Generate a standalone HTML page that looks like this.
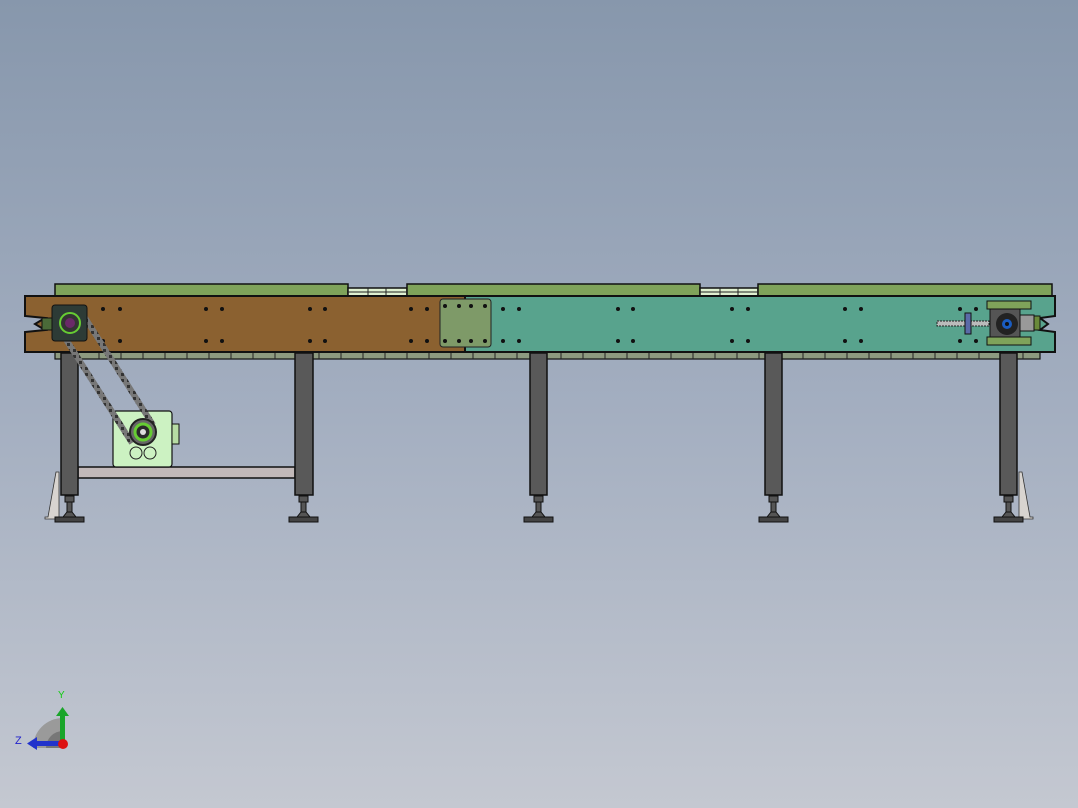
<!DOCTYPE html>
<html><head><meta charset="utf-8"><style>
html,body{margin:0;padding:0;width:1078px;height:808px;overflow:hidden}
body{background:linear-gradient(#8797ac 0%,#a3aec0 50%,#c4c8d1 100%)}
svg{display:block}
</style></head><body>
<svg width="1078" height="808" viewBox="0 0 1078 808" xmlns="http://www.w3.org/2000/svg">
<defs>
<pattern id="chain" width="6" height="6" patternUnits="userSpaceOnUse"><rect width="6" height="6" fill="#777"/><rect x="1" y="1" width="3" height="3" fill="#333"/></pattern>
</defs>
<g stroke="#111" stroke-width="1.5">
<rect x="55" y="284" width="293" height="12" fill="#7fa35a"/>
<rect x="348" y="288" width="59" height="8" fill="#dff0d0"/>
<rect x="407" y="284" width="293" height="12" fill="#7fa35a"/>
<rect x="700" y="288" width="58" height="8" fill="#dff0d0"/>
<rect x="758" y="284" width="294" height="12" fill="#7fa35a"/>
</g>
<g stroke="#222" stroke-width="1"><line x1="348" y1="292" x2="407" y2="292"/><line x1="700" y1="292" x2="758" y2="292"/>
<line x1="368" y1="288" x2="368" y2="296"/><line x1="386" y1="288" x2="386" y2="296"/><line x1="720" y1="288" x2="720" y2="296"/><line x1="738" y1="288" x2="738" y2="296"/></g>
<rect x="55" y="352" width="985" height="7" fill="#8d9a80" stroke="#111" stroke-width="1.2"/>
<g stroke="#222" stroke-width="1">
<path d="M77 352v7M99 352v7M121 352v7M143 352v7M165 352v7M187 352v7M209 352v7M231 352v7M253 352v7M275 352v7M297 352v7M319 352v7M341 352v7M363 352v7M385 352v7M407 352v7M429 352v7M451 352v7M473 352v7M495 352v7M517 352v7M539 352v7M561 352v7M583 352v7M605 352v7M627 352v7M649 352v7M671 352v7M693 352v7M715 352v7M737 352v7M759 352v7M781 352v7M803 352v7M825 352v7M847 352v7M869 352v7M891 352v7M913 352v7M935 352v7M957 352v7M979 352v7M1001 352v7M1023 352v7"/>
</g>
<path d="M25 296H465V352H25V332L45 330L35 324L45 318L25 316Z" fill="#8b6130" stroke="#111" stroke-width="2"/>
<path d="M465 296H1055V316L1040 318L1048 324L1040 330L1055 332V352H465Z" fill="#58a38d" stroke="#111" stroke-width="2"/>
<rect x="440" y="299" width="51" height="48" rx="3" fill="#7e9a68" stroke="#222"/>
<g fill="#111">
<circle cx="103" cy="309" r="2"/><circle cx="120" cy="309" r="2"/><circle cx="103" cy="341" r="2"/><circle cx="120" cy="341" r="2"/>
<circle cx="206" cy="309" r="2"/><circle cx="222" cy="309" r="2"/><circle cx="206" cy="341" r="2"/><circle cx="222" cy="341" r="2"/>
<circle cx="310" cy="309" r="2"/><circle cx="325" cy="309" r="2"/><circle cx="310" cy="341" r="2"/><circle cx="325" cy="341" r="2"/>
<circle cx="411" cy="309" r="2"/><circle cx="427" cy="309" r="2"/><circle cx="411" cy="341" r="2"/><circle cx="427" cy="341" r="2"/>
<circle cx="445" cy="306" r="2"/><circle cx="459" cy="306" r="2"/><circle cx="471" cy="306" r="2"/><circle cx="485" cy="306" r="2"/>
<circle cx="445" cy="341" r="2"/><circle cx="459" cy="341" r="2"/><circle cx="471" cy="341" r="2"/><circle cx="485" cy="341" r="2"/>
<circle cx="503" cy="309" r="2"/><circle cx="519" cy="309" r="2"/><circle cx="503" cy="341" r="2"/><circle cx="519" cy="341" r="2"/>
<circle cx="618" cy="309" r="2"/><circle cx="633" cy="309" r="2"/><circle cx="618" cy="341" r="2"/><circle cx="633" cy="341" r="2"/>
<circle cx="732" cy="309" r="2"/><circle cx="748" cy="309" r="2"/><circle cx="732" cy="341" r="2"/><circle cx="748" cy="341" r="2"/>
<circle cx="845" cy="309" r="2"/><circle cx="861" cy="309" r="2"/><circle cx="845" cy="341" r="2"/><circle cx="861" cy="341" r="2"/>
<circle cx="960" cy="309" r="2"/><circle cx="976" cy="309" r="2"/><circle cx="960" cy="341" r="2"/><circle cx="976" cy="341" r="2"/>
</g>
<g stroke="#111" stroke-width="1.5">
<rect x="78" y="467" width="217" height="11" fill="#c2b9b9"/>
<rect x="61" y="353" width="17" height="142" fill="#595959"/>
<rect x="295" y="353" width="18" height="142" fill="#595959"/>
<rect x="530" y="353" width="17" height="142" fill="#595959"/>
<rect x="765" y="353" width="17" height="142" fill="#595959"/>
<rect x="1000" y="353" width="17" height="142" fill="#595959"/>
</g>
<g fill="#d8d4d0" stroke="#333" stroke-width="0.8">
<path d="M56 472h3v47h-14v-2h3z"/><path d="M1022 472h-3v47h14v-2h-3z"/>
</g>
<g fill="#555" stroke="#111" stroke-width="1">
<rect x="65" y="496" width="9" height="6"/><rect x="67" y="502" width="5" height="10"/><path d="M63 517L67 512H72L76 517Z"/><rect x="55" y="517" width="29" height="5" fill="#444"/>
<rect x="299" y="496" width="9" height="6"/><rect x="301" y="502" width="5" height="10"/><path d="M297 517L301 512H306L310 517Z"/><rect x="289" y="517" width="29" height="5" fill="#444"/>
<rect x="534" y="496" width="9" height="6"/><rect x="536" y="502" width="5" height="10"/><path d="M532 517L536 512H541L545 517Z"/><rect x="524" y="517" width="29" height="5" fill="#444"/>
<rect x="769" y="496" width="9" height="6"/><rect x="771" y="502" width="5" height="10"/><path d="M767 517L771 512H776L780 517Z"/><rect x="759" y="517" width="29" height="5" fill="#444"/>
<rect x="1004" y="496" width="9" height="6"/><rect x="1006" y="502" width="5" height="10"/><path d="M1002 517L1006 512H1011L1015 517Z"/><rect x="994" y="517" width="29" height="5" fill="#444"/>
</g>
<rect x="113" y="411" width="59" height="56" rx="3" fill="#ccf2c2" stroke="#111" stroke-width="1.2"/>
<rect x="172" y="424" width="7" height="20" fill="#b7dca4" stroke="#111"/>
<circle cx="136" cy="453" r="6" fill="none" stroke="#222"/><circle cx="150" cy="453" r="6" fill="none" stroke="#222"/>
<path d="M60 330L132 443M82 313L153 425" stroke="url(#chain)" stroke-width="6" fill="none"/>
<circle cx="143" cy="432" r="13" fill="#666" stroke="#222" stroke-width="2"/>
<circle cx="143" cy="432" r="8" fill="#2a2a2a" stroke="#6c3" stroke-width="3"/>
<circle cx="143" cy="432" r="3" fill="#ddd"/>
<rect x="52" y="305" width="35" height="36" rx="3" fill="#2d3b36" stroke="#111"/>
<rect x="42" y="318" width="10" height="12" fill="#4a6a38" stroke="#111"/>
<circle cx="70" cy="323" r="10" fill="#333" stroke="#6c3" stroke-width="2"/>
<circle cx="70" cy="323" r="5" fill="#6a2868"/>
<rect x="987" y="301" width="44" height="8" fill="#7fa35a" stroke="#111"/>
<rect x="987" y="337" width="44" height="8" fill="#7fa35a" stroke="#111"/>
<rect x="990" y="309" width="30" height="28" fill="#555" stroke="#111"/>
<rect x="1020" y="315" width="14" height="16" fill="#999" stroke="#111"/>
<rect x="1034" y="316" width="6" height="14" fill="#6a8a3a" stroke="#111"/>
<rect x="937" y="321" width="52" height="5" fill="#bbb" stroke="#222" stroke-dasharray="2 1"/>
<rect x="965" y="313" width="6" height="21" fill="#5a6aa8" stroke="#111"/>
<circle cx="1007" cy="324" r="11" fill="#222"/>
<circle cx="1007" cy="324" r="5" fill="#1a5cc0"/><circle cx="1007" cy="324" r="2" fill="#111"/>
<path d="M33 748A30 30 0 0 1 63 718V748Z" fill="#9a9a9a"/>
<path d="M46 748A17 17 0 0 1 63 731V748Z" fill="#777"/>
<rect x="60" y="714" width="5" height="32" fill="#1aa52a"/>
<path d="M56 716L62.5 707L69 716Z" fill="#1aa52a"/>
<rect x="36" y="741" width="26" height="5" fill="#2233cc"/>
<path d="M37 737L27 743.5L37 750Z" fill="#2233cc"/>
<circle cx="63" cy="744" r="5" fill="#d11"/>
<text x="58" y="698" font-family="Liberation Sans, sans-serif" font-size="10" fill="#1c1">Y</text>
<text x="15" y="744" font-family="Liberation Sans, sans-serif" font-size="11" fill="#22c">Z</text>
</svg>
</body></html>
